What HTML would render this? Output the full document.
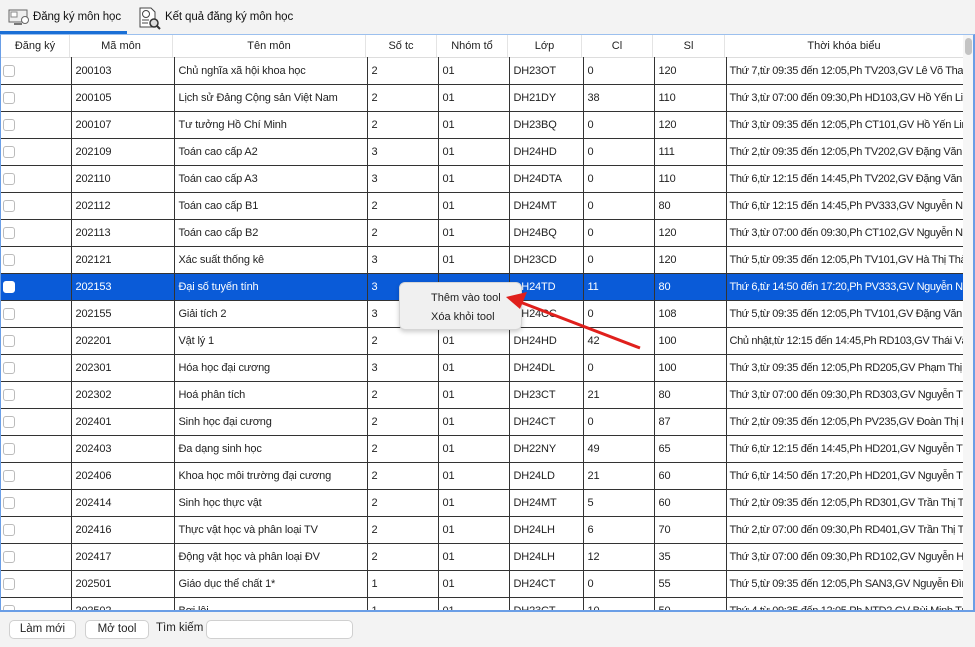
<!DOCTYPE html>
<html><head><meta charset="utf-8">
<style>
*{margin:0;padding:0;box-sizing:border-box}
body{width:975px;height:647px;overflow:hidden;background:#f3f3f3;font-family:"Liberation Sans","DejaVu Sans",sans-serif;font-size:11px;color:#222;position:relative}
.tabs{position:absolute;left:0;top:0;width:975px;height:34px;background:#f3f3f3}
.tab{position:absolute;top:0;height:34px;line-height:34px;font-size:11.5px;color:#111;letter-spacing:-0.1px}
.ul{position:absolute;left:0;top:31px;width:127px;height:3px;background:#1a6fd6}
.frame{position:absolute;left:0;top:34px;width:975px;height:578px;border:1px solid #6a9ee6;border-right:2px solid #6a9ee6;border-bottom:2px solid #6a9ee6;border-top:1px solid #9cc0ee;background:#fff;overflow:hidden}
.hdr{position:absolute;left:0;top:0;height:23px;width:962px;background:#fff}
.hdr div{position:absolute;top:0;height:23px;line-height:23px;text-align:center;border-right:1px solid #e4e4e4;font-size:11px;color:#222}
table{position:absolute;left:-1px;top:22px;border-collapse:collapse;table-layout:fixed;width:963px}
td{height:27px;border:1.5px solid #333;padding:0 4px;white-space:nowrap;overflow:hidden;font-size:11px;letter-spacing:-0.15px}
td:first-child{border-left:none;padding-left:3px}
td:last-child{letter-spacing:-0.35px;padding-left:3px}
tr:first-child td{border-top:1.5px solid #ddd}
.cb{display:inline-block;width:12px;height:12px;border:1px solid #bbb;border-radius:3px;background:#fff;vertical-align:middle}
tr.sel td{background:#0a5bd8;color:#fff}
tr.sel .cb{border-color:#fff}
.sb{position:absolute;left:962px;top:0;width:11px;height:576px;background:#f6f6f6}
.th{position:absolute;left:2px;top:3px;width:7px;height:17px;background:#c3c3c3;border-radius:4px}
.bot{position:absolute;left:0;top:612px;width:975px;height:35px;background:#f3f3f3}
.btn{position:absolute;top:8px;height:19px;border:1px solid #d0d0d0;border-radius:5px;background:#fff;text-align:center;line-height:17px;font-size:11.5px}
.menu{position:absolute;left:399px;top:282px;width:123px;height:48px;background:#f0f0f0;border:1px solid #d6d6d6;border-radius:6px;box-shadow:0 2px 5px rgba(0,0,0,.2);font-size:11px}
.menu div{position:absolute;left:31px}
</style></head><body>
<div class="tabs">
 <svg style="position:absolute;left:8px;top:9px" width="22" height="18" viewBox="0 0 22 18"><rect x="1" y="1" width="18" height="12" fill="#eee" stroke="#666"/><rect x="3" y="3" width="6" height="5" fill="#fff" stroke="#888"/><rect x="6" y="14" width="8" height="2" fill="#777"/><circle cx="17" cy="11" r="3.5" fill="#fff" stroke="#666"/></svg>
 <div class="tab" style="left:33px">Đăng ký môn học</div>
 <svg style="position:absolute;left:137px;top:6px" width="24" height="24" viewBox="0 0 24 24"><path d="M3 2h11l4 4v15H3z" fill="#fff" stroke="#444"/><circle cx="9" cy="8" r="3.5" fill="none" stroke="#444"/><path d="M5 14h7M5 17h6" stroke="#444"/><circle cx="17" cy="17" r="4" fill="#ddd" stroke="#333" stroke-width="1.5"/><path d="M20 20l3 3" stroke="#333" stroke-width="2"/></svg>
 <div class="tab" style="left:165px">Kết quả đăng ký môn học</div>
 <div class="ul"></div>
</div>
<div class="frame">
 <div class="hdr">
  <div style="left:0;width:69px">Đăng ký</div>
  <div style="left:69px;width:103px">Mã môn</div>
  <div style="left:172px;width:193px">Tên môn</div>
  <div style="left:365px;width:71px">Số tc</div>
  <div style="left:436px;width:71px">Nhóm tổ</div>
  <div style="left:507px;width:74px">Lớp</div>
  <div style="left:581px;width:71px">Cl</div>
  <div style="left:652px;width:72px">Sl</div>
  <div style="left:724px;width:238px;border-right:none">Thời khóa biểu</div>
 </div>
 <table>
 <colgroup><col style="width:71px"><col style="width:103px"><col style="width:193px"><col style="width:71px"><col style="width:71px"><col style="width:74px"><col style="width:71px"><col style="width:72px"><col style="width:237px"></colgroup>
 <tr><td><span class="cb"></span></td><td>200103</td><td>Chủ nghĩa xã hội khoa học</td><td>2</td><td>01</td><td>DH23OT</td><td>0</td><td>120</td><td>Thứ 7,từ 09:35 đến 12:05,Ph TV203,GV Lê Võ Thanh</td></tr>
 <tr><td><span class="cb"></span></td><td>200105</td><td>Lịch sử Đảng Cộng sản Việt Nam</td><td>2</td><td>01</td><td>DH21DY</td><td>38</td><td>110</td><td>Thứ 3,từ 07:00 đến 09:30,Ph HD103,GV Hồ Yến  Linh</td></tr>
 <tr><td><span class="cb"></span></td><td>200107</td><td>Tư tưởng Hồ Chí Minh</td><td>2</td><td>01</td><td>DH23BQ</td><td>0</td><td>120</td><td>Thứ 3,từ 09:35 đến 12:05,Ph CT101,GV Hồ Yến  Linh</td></tr>
 <tr><td><span class="cb"></span></td><td>202109</td><td>Toán cao cấp A2</td><td>3</td><td>01</td><td>DH24HD</td><td>0</td><td>111</td><td>Thứ 2,từ 09:35 đến 12:05,Ph TV202,GV Đặng Văn ...</td></tr>
 <tr><td><span class="cb"></span></td><td>202110</td><td>Toán cao cấp A3</td><td>3</td><td>01</td><td>DH24DTA</td><td>0</td><td>110</td><td>Thứ 6,từ 12:15 đến 14:45,Ph TV202,GV Đặng Văn ...</td></tr>
 <tr><td><span class="cb"></span></td><td>202112</td><td>Toán cao cấp B1</td><td>2</td><td>01</td><td>DH24MT</td><td>0</td><td>80</td><td>Thứ 6,từ 12:15 đến 14:45,Ph PV333,GV Nguyễn Nhật</td></tr>
 <tr><td><span class="cb"></span></td><td>202113</td><td>Toán cao cấp B2</td><td>2</td><td>01</td><td>DH24BQ</td><td>0</td><td>120</td><td>Thứ 3,từ 07:00 đến 09:30,Ph CT102,GV Nguyễn Nhật</td></tr>
 <tr><td><span class="cb"></span></td><td>202121</td><td>Xác suất thống kê</td><td>3</td><td>01</td><td>DH23CD</td><td>0</td><td>120</td><td>Thứ 5,từ 09:35 đến 12:05,Ph TV101,GV Hà Thị Thảo</td></tr>
 <tr class="sel"><td><span class="cb"></span></td><td>202153</td><td>Đại số tuyến tính</td><td>3</td><td>01</td><td>DH24TD</td><td>11</td><td>80</td><td>Thứ 6,từ 14:50 đến 17:20,Ph PV333,GV Nguyễn Nhật</td></tr>
 <tr><td><span class="cb"></span></td><td>202155</td><td>Giải tích 2</td><td>3</td><td>01</td><td>DH24CC</td><td>0</td><td>108</td><td>Thứ 5,từ 09:35 đến 12:05,Ph TV101,GV Đặng Văn ...</td></tr>
 <tr><td><span class="cb"></span></td><td>202201</td><td>Vật lý 1</td><td>2</td><td>01</td><td>DH24HD</td><td>42</td><td>100</td><td>Chủ nhật,từ 12:15 đến 14:45,Ph RD103,GV Thái Văn</td></tr>
 <tr><td><span class="cb"></span></td><td>202301</td><td>Hóa học đại cương</td><td>3</td><td>01</td><td>DH24DL</td><td>0</td><td>100</td><td>Thứ 3,từ 09:35 đến 12:05,Ph RD205,GV Phạm Thị B</td></tr>
 <tr><td><span class="cb"></span></td><td>202302</td><td>Hoá phân tích</td><td>2</td><td>01</td><td>DH23CT</td><td>21</td><td>80</td><td>Thứ 3,từ 07:00 đến 09:30,Ph RD303,GV Nguyễn Thị</td></tr>
 <tr><td><span class="cb"></span></td><td>202401</td><td>Sinh học đại cương</td><td>2</td><td>01</td><td>DH24CT</td><td>0</td><td>87</td><td>Thứ 2,từ 09:35 đến 12:05,Ph PV235,GV Đoàn Thị P</td></tr>
 <tr><td><span class="cb"></span></td><td>202403</td><td>Đa dạng sinh học</td><td>2</td><td>01</td><td>DH22NY</td><td>49</td><td>65</td><td>Thứ 6,từ 12:15 đến 14:45,Ph HD201,GV Nguyễn Thị</td></tr>
 <tr><td><span class="cb"></span></td><td>202406</td><td>Khoa học môi trường đại cương</td><td>2</td><td>01</td><td>DH24LD</td><td>21</td><td>60</td><td>Thứ 6,từ 14:50 đến 17:20,Ph HD201,GV Nguyễn Thị</td></tr>
 <tr><td><span class="cb"></span></td><td>202414</td><td>Sinh học thực vật</td><td>2</td><td>01</td><td>DH24MT</td><td>5</td><td>60</td><td>Thứ 2,từ 09:35 đến 12:05,Ph RD301,GV Trần Thị Thanh</td></tr>
 <tr><td><span class="cb"></span></td><td>202416</td><td>Thực vật học và phân loại TV</td><td>2</td><td>01</td><td>DH24LH</td><td>6</td><td>70</td><td>Thứ 2,từ 07:00 đến 09:30,Ph RD401,GV Trần Thị Thanh</td></tr>
 <tr><td><span class="cb"></span></td><td>202417</td><td>Động vật học và phân loại ĐV</td><td>2</td><td>01</td><td>DH24LH</td><td>12</td><td>35</td><td>Thứ 3,từ 07:00 đến 09:30,Ph RD102,GV Nguyễn H.</td></tr>
 <tr><td><span class="cb"></span></td><td>202501</td><td>Giáo dục thể chất 1*</td><td>1</td><td>01</td><td>DH24CT</td><td>0</td><td>55</td><td>Thứ 5,từ 09:35 đến 12:05,Ph SAN3,GV Nguyễn Đình</td></tr>
 <tr><td><span class="cb"></span></td><td>202502</td><td>Bơi lội</td><td>1</td><td>01</td><td>DH23CT</td><td>10</td><td>50</td><td>Thứ 4,từ 09:35 đến 12:05,Ph NTD2,GV Bùi Minh Tú</td></tr>
 </table>
 <div class="sb"><div class="th"></div></div>
</div>
<div class="bot">
 <div class="btn" style="left:9px;width:67px">Làm mới</div>
 <div class="btn" style="left:85px;width:64px">Mở tool</div>
 <div style="position:absolute;left:156px;top:10px;font-size:11.5px">Tìm kiếm</div>
 <div class="btn" style="left:206px;width:147px"></div>
</div>
<div class="menu">
 <div style="top:9px">Thêm vào tool</div>
 <div style="top:28px">Xóa khỏi tool</div>
</div>
<svg style="position:absolute;left:0;top:0" width="975" height="647"><line x1="640" y1="348" x2="520" y2="302" stroke="#e0201c" stroke-width="3"/><polygon points="506,297 527,292 520,309" fill="#e0201c"/></svg>
</body></html>
